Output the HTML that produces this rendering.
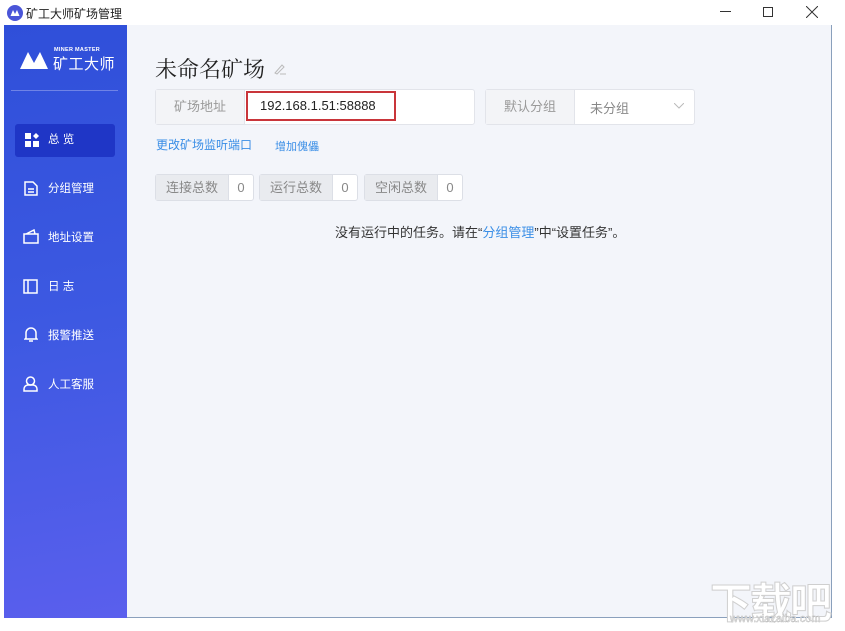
<!DOCTYPE html>
<html><head><meta charset="utf-8"><style>
*{margin:0;padding:0;box-sizing:border-box}
body{width:845px;height:627px;background:#fff;position:relative;overflow:hidden;font-family:"Liberation Sans","Noto Sans CJK SC",sans-serif;}
.abs{position:absolute}
.title{left:26px;top:5px;font-size:12px;color:#222}
.side{left:4px;top:25px;width:123px;height:593px;background:linear-gradient(170deg,#2f4fd9 0%,#3d59e2 50%,#5a5fed 100%)}
.main{left:127px;top:25px;width:705px;height:593px;background:#f3f5fa;border-right:1px solid #8aa0bc;border-bottom:1px solid #8aa0bc}
.nav{color:#fff;font-size:11.5px;left:4px;width:123px;height:20px;line-height:20px;padding-left:44px}
.box{border:1px solid #e2e4ea;border-radius:3px;background:#fff}
.lab{background:#f3f4f7;color:#999;font-size:13px;text-align:center}
.stat{top:174px;height:27px;border:1px solid #dcdfe6;border-radius:3px;background:#fff;font-size:13px;color:#888;display:flex}
.stat span:first-child{background:#e9ebef;padding:0 10px;line-height:25px;border-right:1px solid #dcdfe6}
.stat span:last-child{width:24px;text-align:center;line-height:25px}
</style></head><body>
<svg class="abs" style="left:7px;top:5px" width="16" height="16"><circle cx="8" cy="8" r="8" fill="#4a55d8"/><path d="M3.5 11 L6 5 L8 9 L10 5 L12.5 11Z" fill="#fff"/></svg>
<div class="abs title">矿工大师矿场管理</div>
<div class="abs" style="left:720px;top:11px;width:11px;height:1px;background:#333"></div>
<div class="abs" style="left:763px;top:7px;width:10px;height:10px;border:1px solid #333"></div>
<svg class="abs" style="left:806px;top:6px" width="12" height="12"><path d="M0 0L12 12M12 0L0 12" stroke="#333" stroke-width="1"/></svg>
<div class="abs side"></div>
<div class="abs main"></div>
<svg class="abs" style="left:20px;top:50px" width="28" height="20"><path d="M0 19 L8 2 L14 13 L20 2 L28 19 Z" fill="#fff"/></svg>
<div class="abs" style="left:54px;top:47px;font-size:5.5px;color:#fff;font-weight:bold;letter-spacing:0.3px">MINER MASTER</div>
<div class="abs" style="left:53px;top:53px;font-size:15px;color:#fff;letter-spacing:0.5px">矿工大师</div>
<div class="abs" style="left:11px;top:90px;width:107px;height:1px;background:#6f83e6"></div>
<div class="abs" style="left:15px;top:124px;width:100px;height:33px;background:#1f36c6;border-radius:3px"></div>
<svg class="abs" style="left:25px;top:133px" width="14" height="14" fill="#fff"><rect x="0" y="0" width="6" height="6"/><rect x="0" y="8" width="6" height="6"/><rect x="8" y="8" width="6" height="6"/><path d="M11 0 L14 3 L11 6 L8 3Z"/></svg>
<div class="abs nav" style="top:130px">总 览</div>
<svg class="abs" style="left:24px;top:181px" width="14" height="15" fill="none" stroke="#fff" stroke-width="1.5"><path d="M1 1H9L13 5V14H1Z M4 8H10 M4 11H10"/></svg>
<div class="abs nav" style="top:179px">分组管理</div>
<svg class="abs" style="left:23px;top:229px" width="16" height="15" fill="none" stroke="#fff" stroke-width="1.5"><path d="M1 5H15V14H1Z M3 5L11 1L12 5"/></svg>
<div class="abs nav" style="top:228px">地址设置</div>
<svg class="abs" style="left:23px;top:279px" width="15" height="15" fill="none" stroke="#fff" stroke-width="1.5"><rect x="1" y="1" width="13" height="13"/><path d="M5 1V14"/></svg>
<div class="abs nav" style="top:277px">日 志</div>
<svg class="abs" style="left:24px;top:327px" width="14" height="15" fill="none" stroke="#fff" stroke-width="1.5"><path d="M2 11V6A5 5 0 0 1 12 6V11L13 12H1Z M5 14H9"/></svg>
<div class="abs nav" style="top:326px">报警推送</div>
<svg class="abs" style="left:23px;top:376px" width="15" height="16" fill="none" stroke="#fff" stroke-width="1.5"><circle cx="7.5" cy="5" r="4"/><path d="M1 15V13A4 4 0 0 1 5 9H10A4 4 0 0 1 14 13V15Z"/></svg>
<div class="abs nav" style="top:375px">人工客服</div>

<div class="abs" style="left:155px;top:53px;font-size:22px;color:#222;font-family:'Noto Serif CJK SC','Liberation Serif',serif">未命名矿场</div>
<svg class="abs" style="left:274px;top:63px" width="12" height="12" fill="none" stroke="#bbb" stroke-width="1"><path d="M1 10L8 2L10 4L3 11Z M6 11H12"/></svg>

<div class="abs box" style="left:155px;top:89px;width:320px;height:36px"></div>
<div class="abs lab" style="left:156px;top:90px;width:89px;height:34px;line-height:34px;border-right:1px solid #e2e4ea">矿场地址</div>
<div class="abs" style="left:246px;top:91px;width:150px;height:30px;border:2px solid #c9353a;font-size:13px;color:#222;padding-left:12px;line-height:26px">192.168.1.51:58888</div>

<div class="abs box" style="left:485px;top:89px;width:210px;height:36px"></div>
<div class="abs lab" style="left:486px;top:90px;width:89px;height:34px;line-height:34px;border-right:1px solid #e2e4ea">默认分组</div>
<div class="abs" style="left:590px;top:98px;font-size:13px;color:#888">未分组</div>
<svg class="abs" style="left:674px;top:103px" width="10" height="6" fill="none" stroke="#bbb"><path d="M0 0L5 5L10 0"/></svg>

<div class="abs" style="left:156px;top:136px;font-size:12px;color:#3a8ee6">更改矿场监听端口</div>
<div class="abs" style="left:275px;top:138px;font-size:11px;color:#3a8ee6">增加傀儡</div>

<div class="abs stat" style="left:155px"><span>连接总数</span><span>0</span></div>
<div class="abs stat" style="left:259px"><span>运行总数</span><span>0</span></div>
<div class="abs stat" style="left:364px"><span>空闲总数</span><span>0</span></div>

<div class="abs" style="left:335px;top:222px;font-size:13px;color:#333">没有运行中的任务。请在“<span style="color:#3a8ee6">分组管理</span>”中“设置任务”。</div>

<div class="abs" style="left:710px;top:570px;font-size:42px;color:#fff;-webkit-text-stroke:1px #cfcfcf;font-weight:bold;letter-spacing:-2px">下载吧</div>
<div class="abs" style="left:730px;top:613px;font-size:11px;color:#fff;-webkit-text-stroke:0.5px #bbb">www.xiazaiba.com</div>
</body></html>
